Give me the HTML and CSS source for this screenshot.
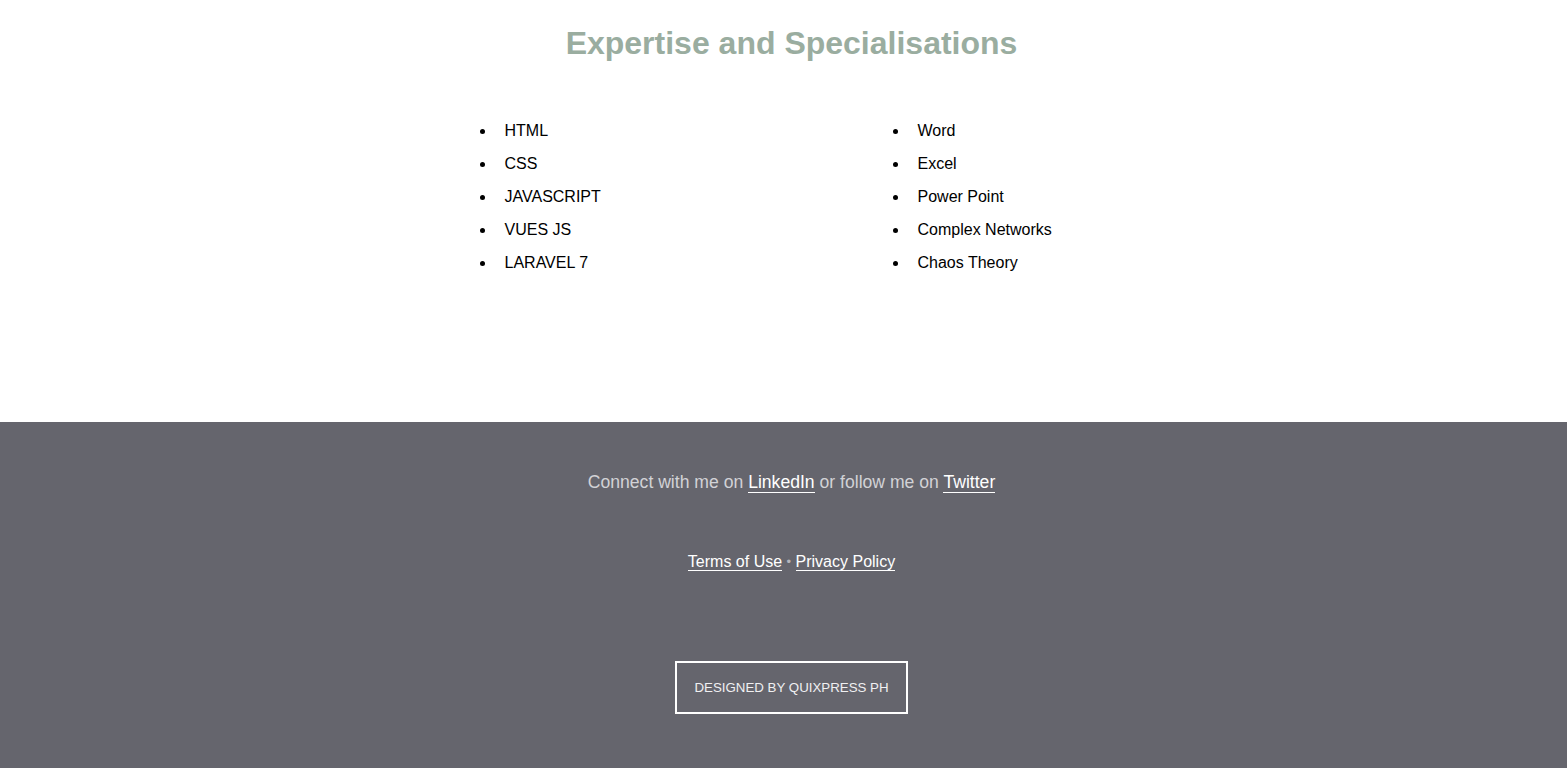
FILE: index.html
```html
<!DOCTYPE html>
<html lang="en">
<head>
<meta charset="utf-8">
<title>Expertise and Specialisations</title>
<link rel="stylesheet" href="styles.css">
</head>
<body>
<section class="skills">
  <h2 class="skills-title">Expertise and Specialisations</h2>
  <div class="skills-cols">
    <ul class="skills-list">
      <li>HTML</li>
      <li>CSS</li>
      <li>JAVASCRIPT</li>
      <li>VUES JS</li>
      <li>LARAVEL 7</li>
    </ul>
    <ul class="skills-list">
      <li>Word</li>
      <li>Excel</li>
      <li>Power Point</li>
      <li>Complex Networks</li>
      <li>Chaos Theory</li>
    </ul>
  </div>
</section>
<footer class="footer">
  <p class="footer-social">Connect with me on <a href="#">LinkedIn</a> or follow me on <a href="#">Twitter</a></p>
  <p class="footer-legal"><a href="#">Terms of Use</a> <span class="dot">&bull;</span> <a href="#">Privacy Policy</a></p>
  <div class="footer-credit"><span class="credit-box">Designed by Quixpress PH</span></div>
</footer>
</body>
</html>
```
FILE: styles.css
```css
html, body {
  margin: 0;
  padding: 0;
}
body {
  font-family: "Liberation Sans", Arial, sans-serif;
  color: #000;
  background: #fff;
}
.skills {
  height: 422px;
  box-sizing: border-box;
  padding: 24px 0 0 16px;
}
.skills-title {
  margin: 0;
  text-align: center;
  font-size: 32px;
  font-weight: bold;
  line-height: 38px;
  color: #9aada0;
}
.skills-cols {
  display: grid;
  grid-template-columns: 413px 413px;
  justify-content: center;
  margin-top: 52px;
}
.skills-list {
  margin: 0;
  padding: 0 0 0 117px;
  list-style: disc;
  font-size: 16px;
}
.skills-list li {
  line-height: 33px;
  padding-left: 9px;
}
.footer {
  background: #65656d;
  color: #d2d2d6;
  text-align: center;
  padding: 49px 0 54px 16px;
}
.footer a {
  color: #fff;
  text-decoration: none;
  border-bottom: 1px solid #fff;
}
.footer-social {
  margin: 0;
  font-size: 17.6px;
  line-height: 22px;
}
.footer-legal {
  margin: 59px 0 0;
  font-size: 16px;
  line-height: 20px;
}
.footer-legal .dot {
  color: #b5b5bb;
  font-size: 13px;
  vertical-align: 1px;
}
.footer-credit {
  margin-top: 89px;
}
.credit-box {
  display: inline-block;
  border: 2px solid #fff;
  color: #f0f0f2;
  font-size: 13.3px;
  text-transform: uppercase;
  padding: 0 17px;
  line-height: 49px;
}
```
